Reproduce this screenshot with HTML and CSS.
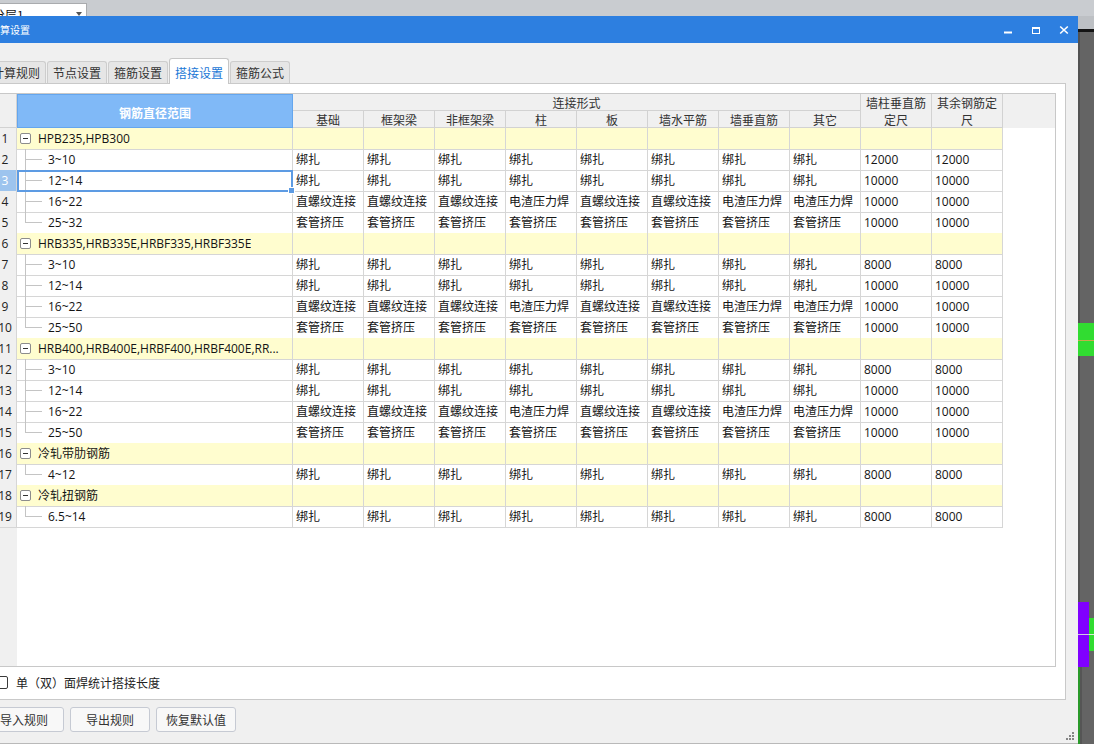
FILE: index.html
```html
<!DOCTYPE html>
<html lang="zh-CN">
<head>
<meta charset="utf-8">
<title>计算设置</title>
<link rel="stylesheet" href="styles.css">
</head>
<body>
<div class="screen">
  <div class="topbar">
    <div class="combo"><span class="combo-text">分层1</span><span class="combo-arrow"></span></div>
  </div>
  <div class="workarea">
    <div class="dialog">
      <div class="titlebar">
        <span class="title">计算设置</span>
        <div class="winctl">
          <span class="wc"><svg width="10" height="10" viewBox="0 0 10 10"><rect x="1" y="6.5" width="8" height="2" fill="#fff"/></svg></span>
          <span class="wc"><svg width="10" height="10" viewBox="0 0 10 10"><rect x="1.5" y="2.5" width="7" height="6" fill="none" stroke="#fff" stroke-width="1"/><rect x="1" y="2" width="8" height="2" fill="#fff"/></svg></span>
          <span class="wc"><svg width="10" height="10" viewBox="0 0 10 10"><path d="M1.2 1.5 L8.8 8.5 M8.8 1.5 L1.2 8.5" stroke="#fff" stroke-width="1.6" fill="none"/></svg></span>
        </div>
      </div>
      <div class="dbody">
        <div class="tabs">
          <div class="tab">计算规则</div>
          <div class="tab">节点设置</div>
          <div class="tab">箍筋设置</div>
          <div class="tab active">搭接设置</div>
          <div class="tab">箍筋公式</div>
        </div>
        <div class="panel">
          <div class="grid">
            <div class="thead">
              <div class="hc h-rn"></div>
              <div class="hc h-tree">钢筋直径范围</div>
              <div class="hc h-span">连接形式</div>
              <div class="hc">基础</div>
              <div class="hc">框架梁</div>
              <div class="hc">非框架梁</div>
              <div class="hc">柱</div>
              <div class="hc">板</div>
              <div class="hc">墙水平筋</div>
              <div class="hc">墙垂直筋</div>
              <div class="hc">其它</div>
              <div class="hc h-tall h-c11">墙柱垂直筋定尺</div>
              <div class="hc h-tall h-c12">其余钢筋定尺</div>
            </div>

            <div class="row group"><div class="c rn">1</div><div class="c tree-g"><span class="tg"></span><span class="gt">HPB235,HPB300</span></div><div class="c"></div><div class="c"></div><div class="c"></div><div class="c"></div><div class="c"></div><div class="c"></div><div class="c"></div><div class="c"></div><div class="c"></div><div class="c"></div></div>
            <div class="row"><div class="c rn">2</div><div class="c tree">3~10</div><div class="c">绑扎</div><div class="c">绑扎</div><div class="c">绑扎</div><div class="c">绑扎</div><div class="c">绑扎</div><div class="c">绑扎</div><div class="c">绑扎</div><div class="c">绑扎</div><div class="c">12000</div><div class="c">12000</div></div>
            <div class="row"><div class="c rn selrn">3</div><div class="c tree sel">12~14</div><div class="c">绑扎</div><div class="c">绑扎</div><div class="c">绑扎</div><div class="c">绑扎</div><div class="c">绑扎</div><div class="c">绑扎</div><div class="c">绑扎</div><div class="c">绑扎</div><div class="c">10000</div><div class="c">10000</div></div>
            <div class="row"><div class="c rn">4</div><div class="c tree">16~22</div><div class="c">直螺纹连接</div><div class="c">直螺纹连接</div><div class="c">直螺纹连接</div><div class="c">电渣压力焊</div><div class="c">直螺纹连接</div><div class="c">直螺纹连接</div><div class="c">电渣压力焊</div><div class="c">电渣压力焊</div><div class="c">10000</div><div class="c">10000</div></div>
            <div class="row"><div class="c rn">5</div><div class="c tree last">25~32</div><div class="c">套管挤压</div><div class="c">套管挤压</div><div class="c">套管挤压</div><div class="c">套管挤压</div><div class="c">套管挤压</div><div class="c">套管挤压</div><div class="c">套管挤压</div><div class="c">套管挤压</div><div class="c">10000</div><div class="c">10000</div></div>

            <div class="row group"><div class="c rn">6</div><div class="c tree-g"><span class="tg"></span><span class="gt">HRB335,HRB335E,HRBF335,HRBF335E</span></div><div class="c"></div><div class="c"></div><div class="c"></div><div class="c"></div><div class="c"></div><div class="c"></div><div class="c"></div><div class="c"></div><div class="c"></div><div class="c"></div></div>
            <div class="row"><div class="c rn">7</div><div class="c tree">3~10</div><div class="c">绑扎</div><div class="c">绑扎</div><div class="c">绑扎</div><div class="c">绑扎</div><div class="c">绑扎</div><div class="c">绑扎</div><div class="c">绑扎</div><div class="c">绑扎</div><div class="c">8000</div><div class="c">8000</div></div>
            <div class="row"><div class="c rn">8</div><div class="c tree">12~14</div><div class="c">绑扎</div><div class="c">绑扎</div><div class="c">绑扎</div><div class="c">绑扎</div><div class="c">绑扎</div><div class="c">绑扎</div><div class="c">绑扎</div><div class="c">绑扎</div><div class="c">10000</div><div class="c">10000</div></div>
            <div class="row"><div class="c rn">9</div><div class="c tree">16~22</div><div class="c">直螺纹连接</div><div class="c">直螺纹连接</div><div class="c">直螺纹连接</div><div class="c">电渣压力焊</div><div class="c">直螺纹连接</div><div class="c">直螺纹连接</div><div class="c">电渣压力焊</div><div class="c">电渣压力焊</div><div class="c">10000</div><div class="c">10000</div></div>
            <div class="row"><div class="c rn">10</div><div class="c tree last">25~50</div><div class="c">套管挤压</div><div class="c">套管挤压</div><div class="c">套管挤压</div><div class="c">套管挤压</div><div class="c">套管挤压</div><div class="c">套管挤压</div><div class="c">套管挤压</div><div class="c">套管挤压</div><div class="c">10000</div><div class="c">10000</div></div>

            <div class="row group"><div class="c rn">11</div><div class="c tree-g"><span class="tg"></span><span class="gt">HRB400,HRB400E,HRBF400,HRBF400E,RR...</span></div><div class="c"></div><div class="c"></div><div class="c"></div><div class="c"></div><div class="c"></div><div class="c"></div><div class="c"></div><div class="c"></div><div class="c"></div><div class="c"></div></div>
            <div class="row"><div class="c rn">12</div><div class="c tree">3~10</div><div class="c">绑扎</div><div class="c">绑扎</div><div class="c">绑扎</div><div class="c">绑扎</div><div class="c">绑扎</div><div class="c">绑扎</div><div class="c">绑扎</div><div class="c">绑扎</div><div class="c">8000</div><div class="c">8000</div></div>
            <div class="row"><div class="c rn">13</div><div class="c tree">12~14</div><div class="c">绑扎</div><div class="c">绑扎</div><div class="c">绑扎</div><div class="c">绑扎</div><div class="c">绑扎</div><div class="c">绑扎</div><div class="c">绑扎</div><div class="c">绑扎</div><div class="c">10000</div><div class="c">10000</div></div>
            <div class="row"><div class="c rn">14</div><div class="c tree">16~22</div><div class="c">直螺纹连接</div><div class="c">直螺纹连接</div><div class="c">直螺纹连接</div><div class="c">电渣压力焊</div><div class="c">直螺纹连接</div><div class="c">直螺纹连接</div><div class="c">电渣压力焊</div><div class="c">电渣压力焊</div><div class="c">10000</div><div class="c">10000</div></div>
            <div class="row"><div class="c rn">15</div><div class="c tree last">25~50</div><div class="c">套管挤压</div><div class="c">套管挤压</div><div class="c">套管挤压</div><div class="c">套管挤压</div><div class="c">套管挤压</div><div class="c">套管挤压</div><div class="c">套管挤压</div><div class="c">套管挤压</div><div class="c">10000</div><div class="c">10000</div></div>

            <div class="row group"><div class="c rn">16</div><div class="c tree-g"><span class="tg"></span><span class="gt">冷轧带肋钢筋</span></div><div class="c"></div><div class="c"></div><div class="c"></div><div class="c"></div><div class="c"></div><div class="c"></div><div class="c"></div><div class="c"></div><div class="c"></div><div class="c"></div></div>
            <div class="row"><div class="c rn">17</div><div class="c tree last">4~12</div><div class="c">绑扎</div><div class="c">绑扎</div><div class="c">绑扎</div><div class="c">绑扎</div><div class="c">绑扎</div><div class="c">绑扎</div><div class="c">绑扎</div><div class="c">绑扎</div><div class="c">8000</div><div class="c">8000</div></div>

            <div class="row group"><div class="c rn">18</div><div class="c tree-g"><span class="tg"></span><span class="gt">冷轧扭钢筋</span></div><div class="c"></div><div class="c"></div><div class="c"></div><div class="c"></div><div class="c"></div><div class="c"></div><div class="c"></div><div class="c"></div><div class="c"></div><div class="c"></div></div>
            <div class="row"><div class="c rn">19</div><div class="c tree last">6.5~14</div><div class="c">绑扎</div><div class="c">绑扎</div><div class="c">绑扎</div><div class="c">绑扎</div><div class="c">绑扎</div><div class="c">绑扎</div><div class="c">绑扎</div><div class="c">绑扎</div><div class="c">8000</div><div class="c">8000</div></div>
          </div>
          <label class="check"><span class="box"></span><span>单（双）面焊统计搭接长度</span></label>
        </div>
        <div class="btnrow">
          <div class="btn">导入规则</div>
          <div class="btn">导出规则</div>
          <div class="btn">恢复默认值</div>
          <svg class="grip" width="8" height="8" viewBox="0 0 8 8"><g fill="#858585"><rect x="6" y="0" width="2" height="2"/><rect x="3" y="3" width="2" height="2"/><rect x="6" y="3" width="2" height="2"/><rect x="0" y="6" width="2" height="2"/><rect x="3" y="6" width="2" height="2"/><rect x="6" y="6" width="2" height="2"/></g></svg>
        </div>
      </div>
    </div>
    <div class="bgapp">
      <div class="bg-top"></div>
      <div class="bg-black"></div>
      <div class="bg-gap1"></div>
      <div class="bg-green"></div>
      <div class="bg-gap2"></div>
      <div class="bg-mix">
        <div class="bg-purple"></div>
        <div class="bg-mixright"><div class="bg-mr-top"></div><div class="bg-mr-green"></div></div>
      </div>
      <div class="bg-bottom"></div>
    </div>
  </div>
</div>
</body>
</html>
```

FILE: styles.css
```css
* { box-sizing: border-box; }
html, body { margin: 0; padding: 0; }
body {
  width: 1094px;
  height: 744px;
  overflow: hidden;
  background: #c9ccd0;
  font-family: "Open Sans", "Noto Sans CJK SC", sans-serif;
  font-size: 12px;
  color: #1a1a1a;
}
.screen { display: flex; flex-direction: column; width: 1094px; height: 744px; }

/* top strip */
.topbar { height: 16px; flex: none; display: flex; align-items: flex-start; padding-top: 3px; }
.combo {
  width: 87px; height: 13px; background: #fff;
  border: 1px solid #a9abae; border-left: none; border-bottom: none;
  display: flex; align-items: flex-start; overflow: hidden;
}
.combo-text { margin-left: -7px; margin-top: 3px; line-height: 16px; font-family: "Noto Sans CJK SC", sans-serif; color: #111; }
.combo-arrow {
  margin-left: auto; margin-right: 4px; margin-top: 8px;
  width: 0; height: 0;
  border-left: 3px solid transparent; border-right: 3px solid transparent; border-top: 4px solid #555;
}

.workarea { display: flex; height: 728px; flex: none; }
.dialog { width: 1078px; flex: none; display: flex; flex-direction: column; }

/* title bar */
.titlebar { height: 27px; flex: none; background: #2d7fe0; display: flex; align-items: center; color: #fff; }
.title { font-size: 10px; margin-left: -10px; font-family: "Noto Sans CJK SC", sans-serif; line-height: 14px; margin-top: 1px; }
.winctl { margin-left: auto; display: flex; }
.wc { width: 28px; height: 27px; display: flex; align-items: center; justify-content: center; }

/* body */
.dbody {
  flex: 1; background: #f0f0f0; padding-top: 15px;
  border-bottom: 1px solid #b9b9b9;
  display: flex; flex-direction: column;
}
.tabs { height: 25px; flex: none; display: flex; align-items: flex-end; gap: 1px; margin-left: -14px; position: relative; z-index: 1; }
.tab {
  width: 60px; height: 22px; background: #e6e6e6;
  border: 1px solid #cdcdcd; border-bottom: none; border-radius: 3px 3px 0 0;
  text-align: center; line-height: 21px; color: #333;
  font-family: "Noto Sans CJK SC", sans-serif; font-size: 12px;
}
.tab.active { height: 26px; margin-bottom: -1px; background: #fff; color: #1b78d6; padding-top: 3px; border-color: #c6c6c6; }

.panel {
  height: 617px; flex: none; margin-right: 12px;
  background: #fff; border: 1px solid #c9c9c9; border-left: none;
  padding: 9px 9px 10px 0;
  display: flex; flex-direction: column;
}
.grid {
  height: 574px; flex: none;
  border: 1px solid #c8c8c8; border-left: none;
  background: linear-gradient(90deg, #f0f0f0 17px, #fff 17px);
}

/* header */
.thead {
  display: grid;
  grid-template-columns: 17px 276px repeat(10, 71px);
  grid-template-rows: 17px 17px;
  background: #f0f0f0;
}
.hc {
  border-right: 1px solid #d2d2d2; border-bottom: 1px solid #d2d2d2;
  text-align: center; line-height: 17px; color: #333;
  font-family: "Noto Sans CJK SC", sans-serif;
}
.h-rn { grid-column: 1; grid-row: 1 / 3; }
.h-tree {
  grid-column: 2; grid-row: 1 / 3;
  background: #80b9f7; box-shadow: inset 0 0 0 1px #64a6ee;
  border: none; color: #fff; font-weight: bold;
  display: flex; align-items: center; justify-content: center; padding-top: 2px;
}
.h-span { grid-column: 3 / 11; grid-row: 1; }
.h-tall { grid-row: 1 / 3; padding: 0 2px; }
.h-c11 { grid-column: 11; }
.h-c12 { grid-column: 12; }

/* rows */
.row { display: grid; grid-template-columns: 17px 276px repeat(10, 71px); height: 21px; }
.c {
  border-right: 1px solid #d6d6d6; border-bottom: 1px solid #d6d6d6;
  line-height: 20px; padding-left: 3px; padding-top: 1px;
  white-space: nowrap; overflow: hidden; color: #141414;
}
.rn {
  background: #f0f0f0; display: flex; justify-content: center;
  padding: 1px 6px 0 0; overflow: visible; color: #222;
}
.rn.selrn { background: #9dc4ee; color: #fff; }
.group .c:not(.rn) { background: #fffdcf; }

.tree {
  padding-left: 31px;
  background-image: linear-gradient(#c4c4c4, #c4c4c4), linear-gradient(#c4c4c4, #c4c4c4);
  background-repeat: no-repeat;
  background-size: 1px 100%, 16px 1px;
  background-position: 8px 0, 9px 10px;
}
.tree.last { background-size: 1px 11px, 16px 1px; }
.group .tree-g {
  display: flex; align-items: center; gap: 7px; padding-left: 3px; padding-top: 0;
  background-color: #fffdcf;
  background-image: linear-gradient(#c4c4c4, #c4c4c4);
  background-repeat: no-repeat;
  background-size: 1px 5px;
  background-position: 8px 16px;
}
.gt { overflow: hidden; white-space: nowrap; padding-top: 1px; }
.tg {
  flex: none; width: 11px; height: 11px;
  border: 1px solid #8c8c8c; border-radius: 2px;
  background: #fff linear-gradient(#333, #333) no-repeat center / 5px 1px;
}

.sel { position: relative; overflow: visible; z-index: 2; outline: 2px solid #5d9be3; outline-offset: -2px; }
.sel::after {
  content: ""; position: absolute; right: -3px; bottom: -3px;
  width: 5px; height: 5px; background: #5d9be3; border: 1px solid #fff;
}

/* checkbox */
.check {
  display: flex; align-items: center; gap: 8px;
  margin-top: 8px; height: 14px;
  font-family: "Noto Sans CJK SC", sans-serif; color: #222;
}
.box { flex: none; width: 13px; height: 13px; margin-left: -5px; border: 1px solid #3a3a3a; border-radius: 2px; background: #fff; }

/* buttons */
.btnrow { display: flex; margin-top: 7px; height: 36px; flex: none; gap: 6px; margin-left: -16px; align-items: flex-start; }
.btn {
  width: 80px; height: 25px; flex: none;
  border: 1px solid #c6cad3; border-radius: 3px; background: #f8f8f8;
  line-height: 23px; text-align: center; color: #333;
  font-family: "Noto Sans CJK SC", sans-serif;
}
.grip { margin-left: auto; align-self: flex-end; margin-right: 4px; margin-bottom: 3px; }

/* background application strip */
.bgapp { flex: 1; display: flex; flex-direction: column; background: linear-gradient(90deg, #525252 0 2px, #646464 2px); }
.bg-top { height: 13px; background: #bdc0c4; }
.bg-black { height: 3px; background: #141414; }
.bg-gap1 { height: 291px; }
.bg-green { height: 33px; background: linear-gradient(#31dc31 0 17px, #c8a94c 17px 18px, #31dc31 18px); }
.bg-gap2 { height: 246px; }
.bg-mix { height: 65px; display: flex; }
.bg-purple { width: 11px; background: linear-gradient(#8000ff 0 32px, #d2c2e8 32px 33px, #8000ff 33px); }
.bg-mixright { flex: 1; display: flex; flex-direction: column; background: #646464; }
.bg-mr-top { height: 16px; }
.bg-mr-green { height: 33px; background: linear-gradient(#31dc31 0 16px, #d9e8d9 16px 17px, #31dc31 17px); }
.bg-bottom { height: 77px; background: linear-gradient(90deg, #2a9a2a 0 2px, #555 2px 4px, #646464 4px); }
```
